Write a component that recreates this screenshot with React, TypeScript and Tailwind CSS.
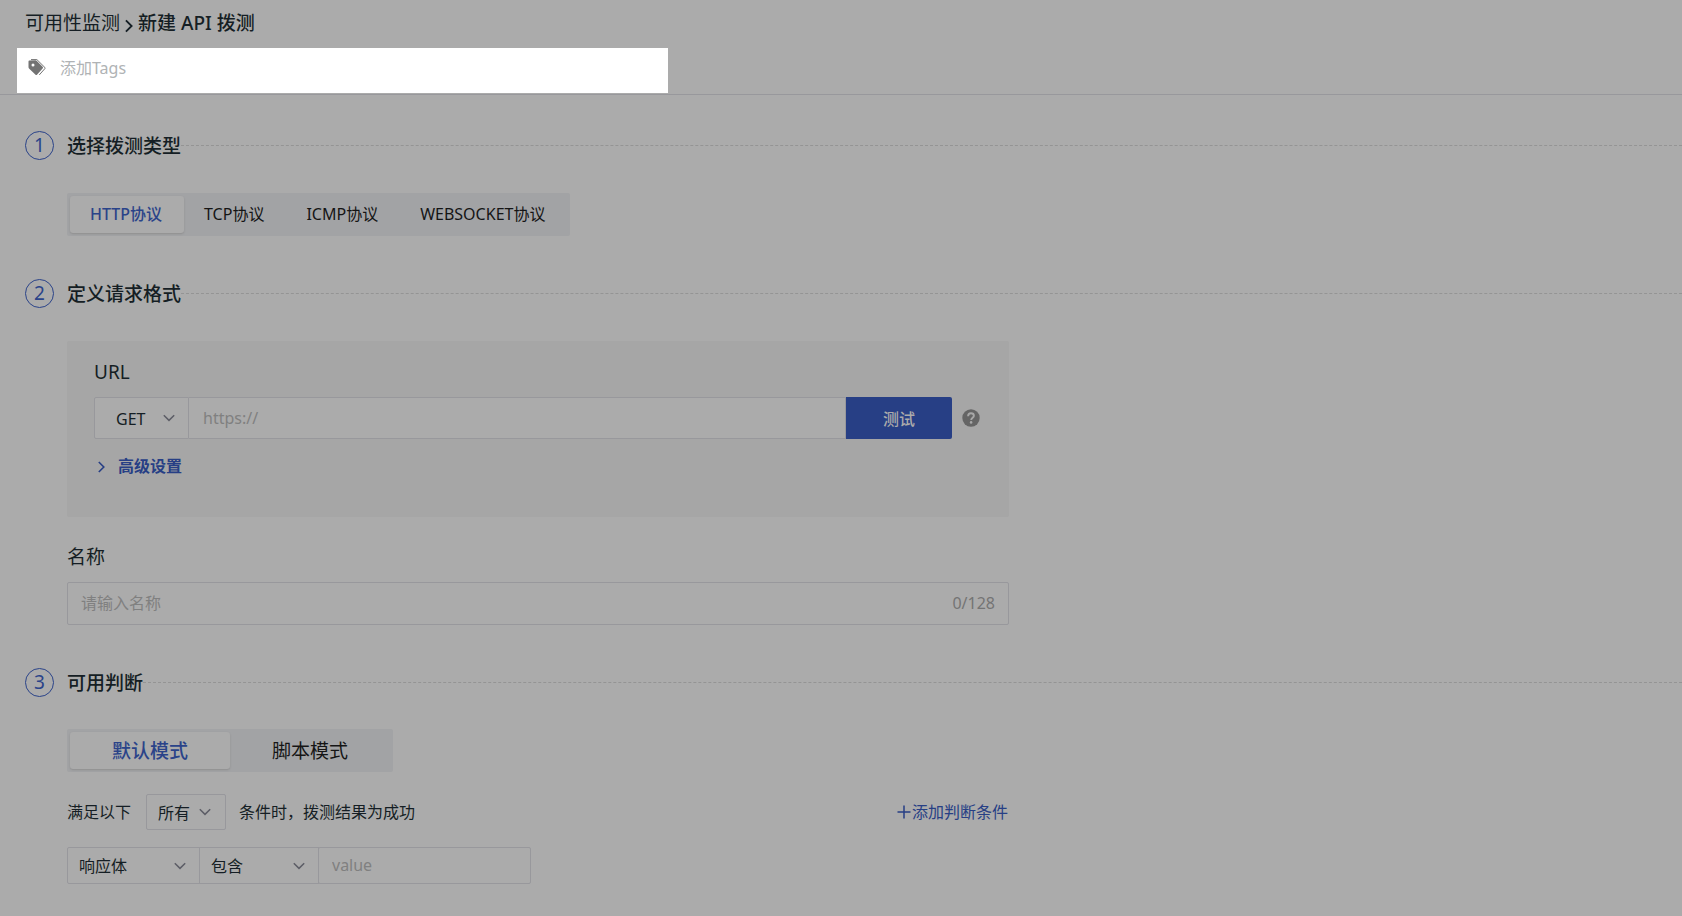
import { useState } from 'react'
import type { ReactNode } from 'react'

interface TabsProps {
  items: string[]
  value: string
  onChange: (value: string) => void
  itemClassName: string
}

interface SelectBoxProps {
  label: string
  options: string[]
  className: string
  selectClassName: string
  chevronClassName: string
}

const HTTP_METHODS = ['GET', 'POST', 'PUT', 'DELETE', 'HEAD', 'PATCH', 'OPTIONS']
const TEST_TYPES = ['HTTP协议', 'TCP协议', 'ICMP协议', 'WEBSOCKET协议']
const MODES = ['默认模式', '脚本模式']
const NAME_LIMIT = 128

function TagsIcon() {
  return (
    <svg viewBox="0 0 18 17" className="h-[17px] w-[18px] shrink-0" aria-hidden="true">
      <path
        fill="#737373"
        fillRule="evenodd"
        d="M1.4 1.6 7.4 1.2a1.6 1.6 0 0 1 1.2.5l6 6a1.3 1.3 0 0 1 0 1.9l-5.4 6a1.3 1.3 0 0 1-1.9 0L1 9.4a1.6 1.6 0 0 1-.5-1.1L.5 2.5a.9.9 0 0 1 .9-.9ZM5 4.600a1.500 1.500 0 1 0 0 3 1.500 1.500 0 0 0 0-3Z"
      />
      <path d="M3 .6h5.9l8 7.9a.8.8 0 0 1 0 1.1l-5.6 6.3" fill="none" stroke="#737373" strokeWidth="1" />
    </svg>
  )
}

function Chevron({ className }: { className: string }) {
  return (
    <svg viewBox="0 0 12 8" className={className} fill="none" stroke="currentColor" strokeWidth="1.5" aria-hidden="true">
      <path d="m.8 1.2 5.2 5.2 5.2-5.2" />
    </svg>
  )
}

function ChevronRight({ className }: { className: string }) {
  return (
    <svg viewBox="0 0 7 12" className={className} fill="none" stroke="currentColor" strokeWidth="1.6" aria-hidden="true">
      <path d="m.8 1 5 5-5 5" />
    </svg>
  )
}

function HelpIcon() {
  return (
    <svg viewBox="0 0 18 18" className="size-[18px]" aria-hidden="true">
      <circle cx="9" cy="9" r="8.7" fill="#656565" />
      <path
        d="M6.1 7.2c0-1.8 1.2-2.9 2.9-2.9s2.9 1 2.9 2.5c0 2-2.7 2.1-2.7 4.3"
        fill="none"
        stroke="#a7a7a7"
        strokeWidth="1.9"
      />
      <circle cx="9.1" cy="13.4" r="1.3" fill="#a7a7a7" />
    </svg>
  )
}

function Step({ number, title, children }: { number: number; title: string; children: ReactNode }) {
  return (
    <section>
      <div className="flex items-center">
        <span className="mr-[13px] flex size-[29px] shrink-0 items-center justify-center rounded-full border border-[#2a4389] text-[19px] leading-none text-[#2a4389]">
          {number}
        </span>
        <h2 className="text-[19px] leading-7 font-medium text-[#151e24]">{title}</h2>
        <div className="flex-1 border-t border-dashed border-[#949494]" />
      </div>
      <div className="pl-[42px]">{children}</div>
    </section>
  )
}

function Tabs({ items, value, onChange, itemClassName }: TabsProps) {
  return (
    <div role="tablist" className="inline-flex rounded-[2px] bg-[#a2a3a5] p-[3px]">
      {items.map((item) => (
        <button
          key={item}
          type="button"
          role="tab"
          aria-selected={item === value}
          onClick={() => onChange(item)}
          className={`h-[37px] rounded-[3px] ${itemClassName} ${
            item === value ? 'bg-[#ababab] font-medium text-[#2a4389] shadow-[0_1px_2px_#8f8f8f]' : 'text-[#151515]'
          }`}
        >
          {item}
        </button>
      ))}
    </div>
  )
}

function SelectBox({ label, options, className, selectClassName, chevronClassName }: SelectBoxProps) {
  return (
    <div className={`relative ${className}`}>
      <select
        aria-label={label}
        className={`size-full appearance-none border border-[#98989c] bg-[#ababab] text-base text-[#151e24] outline-none ${selectClassName}`}
      >
        {options.map((option) => (
          <option key={option}>{option}</option>
        ))}
      </select>
      <Chevron className={`pointer-events-none absolute top-1/2 h-2 w-3 -translate-y-1/2 text-[#5c5d66] ${chevronClassName}`} />
    </div>
  )
}

export default function App() {
  const [testType, setTestType] = useState(TEST_TYPES[0])
  const [mode, setMode] = useState(MODES[0])
  const [name, setName] = useState('')

  return (
    <div className="min-h-screen bg-[#ababab] font-['Noto_Sans','Noto_Sans_CJK_SC',sans-serif] text-base text-[#151e24]">
      <header className="border-b border-[#98989c]">
        <nav className="flex h-12 items-center pb-px pl-[25px] text-[19px]">
          <a href="#monitor">可用性监测</a>
          <ChevronRight className="mx-[5px] mt-1 h-3.5 w-2" />
          <h1 className="font-medium">新建 API 拨测</h1>
        </nav>
        <label className="mb-px ml-[17px] flex h-[45px] w-full max-w-[651px] items-center gap-3.5 bg-white pb-1.5 pl-[11px]">
          <TagsIcon />
          <input
            aria-label="添加Tags"
            placeholder="添加Tags"
            className="min-w-0 flex-1 outline-none placeholder:text-[#b0b3b5]"
          />
        </label>
      </header>

      <main className="flex flex-col gap-[43px] pt-9 pb-8 pl-[25px]">
        <Step number={1} title="选择拨测类型">
          <div className="flex pt-[33px]">
            <Tabs items={TEST_TYPES} value={testType} onChange={setTestType} itemClassName="pr-[22px] pb-0.5 pl-5 text-base" />
          </div>
        </Step>

        <Step number={2} title="定义请求格式">
          <div className="max-w-[942px] pt-[33px]">
            <div className="h-44 rounded-[2px] bg-[#a6a6a6] px-[27px] pt-[17px]">
              <label htmlFor="url" className="block text-[19px] leading-7">
                URL
              </label>
              <div className="mt-[11px] flex h-[42px] items-center">
                <SelectBox
                  label="请求方法"
                  options={HTTP_METHODS}
                  className="h-full w-[95px] shrink-0"
                  selectClassName="rounded-l-[2px] pt-0.5 pl-[21px]"
                  chevronClassName="right-3.5"
                />
                <input
                  id="url"
                  placeholder="https://"
                  className="h-full min-w-0 flex-1 border border-l-0 border-[#98989c] bg-[#ababab] px-3.5 outline-none placeholder:text-[#808080]"
                />
                <button
                  type="button"
                  className="h-full w-[106px] rounded-r-[2px] bg-[#273f85] pt-0.5 font-medium text-[#ababab]"
                >
                  测试
                </button>
                <button type="button" aria-label="帮助" className="mr-[2px] ml-2.5">
                  <HelpIcon />
                </button>
              </div>
              <button type="button" className="mt-[15px] flex items-center gap-[13px] pl-1 font-bold text-[#273f85]">
                <ChevronRight className="mt-0.5 h-3 w-[7px]" />
                高级设置
              </button>
            </div>

            <label htmlFor="name" className="mt-[26px] block text-[19px] leading-7">
              名称
            </label>
            <div className="mt-[11px] flex h-[43px] items-center rounded-[2px] border border-[#98989c] px-[13px] pb-0.5">
              <input
                id="name"
                value={name}
                maxLength={NAME_LIMIT}
                onChange={(event) => setName(event.target.value)}
                placeholder="请输入名称"
                className="min-w-0 flex-1 outline-none placeholder:text-[#808080]"
              />
              <span className="text-[#747474]">
                {name.length}/{NAME_LIMIT}
              </span>
            </div>
          </div>
        </Step>

        <Step number={3} title="可用判断">
          <div className="max-w-[942px] pt-8">
            <div className="flex">
              <Tabs items={MODES} value={mode} onChange={setMode} itemClassName="w-40 pt-0.5 text-[19px]" />
            </div>
            <div className="mt-[22px] flex h-9 items-center">
              <span>满足以下</span>
              <SelectBox
                label="满足条件"
                options={['所有', '任意']}
                className="mr-[13px] ml-[15px] h-full w-20"
                selectClassName="rounded-[2px] pt-0.5 pl-[11px]"
                chevronClassName="right-[15px]"
              />
              <span>条件时，拨测结果为成功</span>
              <button type="button" className="mr-px ml-auto flex items-center gap-px text-[#273f85]">
                <svg viewBox="0 0 14 14" className="size-3.5" stroke="currentColor" strokeWidth="1.5" aria-hidden="true">
                  <path d="M7 .5v13M.5 7h13" />
                </svg>
                添加判断条件
              </button>
            </div>
            <div className="mt-[17px] flex h-[37px]">
              <SelectBox
                label="判断对象"
                options={['响应体', '响应头', '响应时间', '状态码']}
                className="w-[133px]"
                selectClassName="rounded-l-[2px] pl-[11px]"
                chevronClassName="right-3.5"
              />
              <SelectBox
                label="判断方式"
                options={['包含', '不包含', '等于']}
                className="-ml-px w-[120px]"
                selectClassName="pl-[11px]"
                chevronClassName="right-3.5"
              />
              <input
                aria-label="value"
                placeholder="value"
                className="-ml-px w-[213px] rounded-[2px] border border-[#98989c] px-[13px] pb-0.5 outline-none placeholder:text-[#808080]"
              />
            </div>
          </div>
        </Step>
      </main>
    </div>
  )
}
